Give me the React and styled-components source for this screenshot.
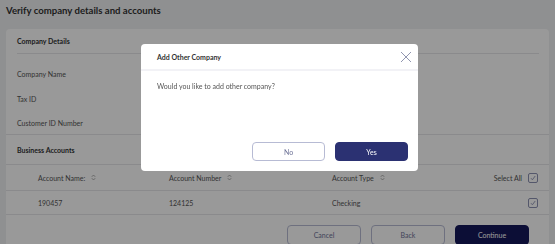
import React from "react";
import styled, { createGlobalStyle } from "styled-components";

const GlobalStyle = createGlobalStyle`
  html, body {
    margin: 0;
    padding: 0;
    background: #eff0f2;
    font-family: "Lato", "Liberation Sans", sans-serif;
    overflow: hidden;
  }
`;

const Page = styled.div`
  width: 555px;
  height: 244px;
  padding: 0 6px;
  box-sizing: border-box;
  overflow: hidden;
`;

const Title = styled.h1`
  margin: 0;
  height: 29px;
  display: flex;
  align-items: center;
  padding-bottom: 9px;
  box-sizing: border-box;
  font-size: 9.6px;
  font-weight: 700;
  color: #333;
`;

const Card = styled.div`
  background: #fff;
  border-radius: 4px 4px 0 0;
  height: 215px;
`;

const SectionTitle = styled.div`
  height: ${(p) => p.h}px;
  display: flex;
  align-items: center;
  padding: 0 11px;
  font-size: 7px;
  font-weight: 700;
  color: #333;
`;

const Divider = styled.div`
  height: 1px;
  background: #e6e6ea;
  margin: ${(p) => (p.inset ? "0 10px 0 11px" : "0")};
`;

const InfoList = styled.div`
  padding: 8px 11px 0;
  height: 80px;
  box-sizing: border-box;
`;

const InfoRow = styled.div`
  height: 24.5px;
  display: flex;
  align-items: center;
  font-size: 7px;
  color: #555;
`;

const TableRow = styled.div`
  display: grid;
  grid-template-columns: 131px 163px 1fr 60px;
  align-items: center;
  height: ${(p) => p.h}px;
  padding: 0 11px 0 32px;
  font-size: 7px;
  color: #555;
`;

const Cell = styled.div`
  display: flex;
  align-items: center;
  gap: 6px;
  justify-content: ${(p) => (p.end ? "flex-end" : "flex-start")};
`;

const Box = styled.div`
  width: 10px;
  height: 10px;
  border: 1px solid #8d92b3;
  border-radius: 2px;
  box-sizing: border-box;
  display: flex;
  align-items: center;
  justify-content: center;
`;

const Actions = styled.div`
  display: flex;
  justify-content: flex-end;
  gap: 10px;
  padding: 10px 20px 0;
`;

const Button = styled.button`
  width: ${(p) => p.w}px;
  height: ${(p) => p.h}px;
  border-radius: 4px;
  font-family: inherit;
  font-size: 7px;
  cursor: pointer;
  border: 1px solid ${(p) => (p.primary ? p.bg : "#b7bbd4")};
  background: ${(p) => (p.primary ? p.bg : "#fff")};
  color: ${(p) => (p.primary ? "#fff" : "#6e7397")};
`;

const Overlay = styled.div`
  position: fixed;
  inset: 0;
  background: rgba(0, 0, 0, 0.4);
`;

const Modal = styled.div`
  position: fixed;
  left: 141px;
  top: 44px;
  width: 277px;
  height: 127px;
  background: #fff;
  border-radius: 4px;
  display: flex;
  flex-direction: column;
`;

const ModalHeader = styled.div`
  height: 25px;
  display: flex;
  align-items: center;
  justify-content: space-between;
  padding: 0 6px 0 16px;
  border-bottom: 2px solid #f2f2f6;
  font-size: 7px;
  font-weight: 700;
  color: #333;
`;

const ModalBody = styled.div`
  flex: 1;
  padding: 11px 16px 0;
  font-size: 7px;
  color: #555;
`;

const ModalActions = styled.div`
  display: flex;
  justify-content: flex-end;
  gap: 10px;
  padding: 0 10px 10px;
`;

const SortIcon = () => (
  <svg width="5" height="7" viewBox="0 0 5 7">
    <path d="M0.8 2.8 L2.5 1 L4.2 2.8 M0.8 4.2 L2.5 6 L4.2 4.2" fill="none" stroke="#999" strokeWidth="0.8" />
  </svg>
);

const Check = () => (
  <svg width="8" height="8" viewBox="0 0 8 8">
    <path d="M2 4.2 L3.4 5.8 L6.2 2" fill="none" stroke="#8d92b3" strokeWidth="0.9" />
  </svg>
);

const CloseIcon = () => (
  <svg width="12" height="12" viewBox="0 0 12 12">
    <path d="M1 1 L11 11 M11 1 L1 11" stroke="#9196b0" strokeWidth="1" />
  </svg>
);

export default function App() {
  return (
    <Page>
      <GlobalStyle />
      <Title>Verify company details and accounts</Title>
      <Card>
        <SectionTitle h={24}>Company Details</SectionTitle>
        <Divider inset />
        <InfoList>
          <InfoRow>Company Name</InfoRow>
          <InfoRow>Tax ID</InfoRow>
          <InfoRow>Customer ID Number</InfoRow>
        </InfoList>
        <Divider />
        <SectionTitle h={29}>Business Accounts</SectionTitle>
        <Divider />
        <TableRow h={25}>
          <Cell>Account Name: <SortIcon /></Cell>
          <Cell>Account Number <SortIcon /></Cell>
          <Cell>Account Type <SortIcon /></Cell>
          <Cell end>Select All <Box><Check /></Box></Cell>
        </TableRow>
        <Divider />
        <TableRow h={23}>
          <Cell>190457</Cell>
          <Cell>124125</Cell>
          <Cell>Checking</Cell>
          <Cell end><Box><Check /></Box></Cell>
        </TableRow>
        <Divider />
        <Actions>
          <Button w={74} h={20}>Cancel</Button>
          <Button w={74} h={20}>Back</Button>
          <Button w={74} h={20} primary bg="#15185a">Continue</Button>
        </Actions>
      </Card>
      <Overlay />
      <Modal>
        <ModalHeader>
          Add Other Company
          <CloseIcon />
        </ModalHeader>
        <ModalBody>Would you like to add other company?</ModalBody>
        <ModalActions>
          <Button w={73} h={19}>No</Button>
          <Button w={73} h={19} primary bg="#2b3172">Yes</Button>
        </ModalActions>
      </Modal>
    </Page>
  );
}
